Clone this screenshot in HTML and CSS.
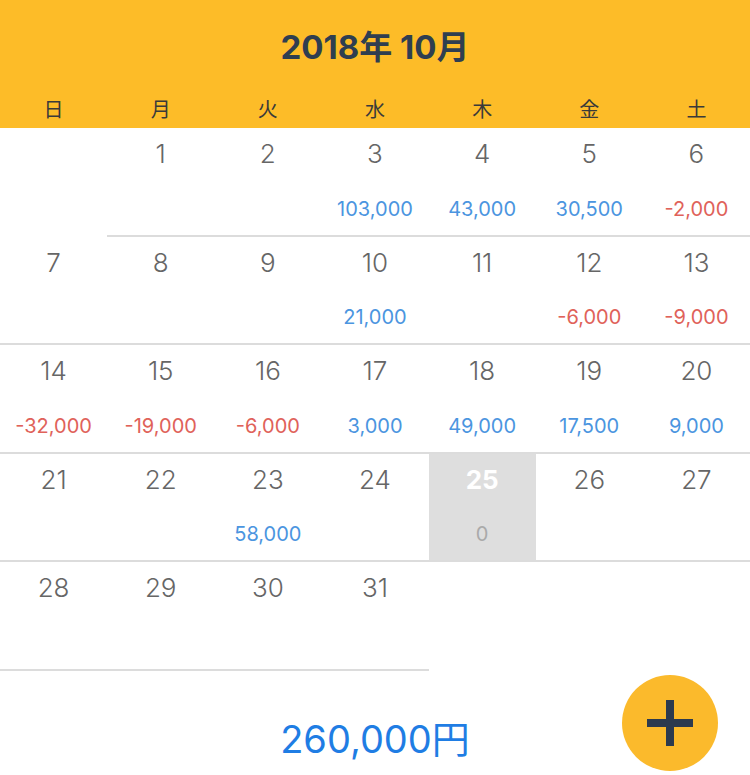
FILE: index.html
```html
<!DOCTYPE html>
<html>
	<head>
		<meta charset="utf-8">
		<title>カレンダー</title>
		<link rel="stylesheet" href="styles.css">
	</head>
	<body>
		<div class="header">
			<h2 class="title">2018年 10月</h2>
			<ul class="week">
				<li>日</li>
				<li>月</li>
				<li>火</li>
				<li>水</li>
				<li>木</li>
				<li>金</li>
				<li>土</li>
			</ul>
		</div>

		<div class="days">
			<div class="day empty"></div>
			<div class="day"><b>1</b><span></span></div>
			<div class="day"><b>2</b><span></span></div>
			<div class="day"><b>3</b><span class="plus">103,000</span></div>
			<div class="day"><b>4</b><span class="plus">43,000</span></div>
			<div class="day"><b>5</b><span class="plus">30,500</span></div>
			<div class="day"><b>6</b><span class="minus">-2,000</span></div>

			<div class="day"><b>7</b><span></span></div>
			<div class="day"><b>8</b><span></span></div>
			<div class="day"><b>9</b><span></span></div>
			<div class="day"><b>10</b><span class="plus">21,000</span></div>
			<div class="day"><b>11</b><span></span></div>
			<div class="day"><b>12</b><span class="minus">-6,000</span></div>
			<div class="day"><b>13</b><span class="minus">-9,000</span></div>

			<div class="day"><b>14</b><span class="minus">-32,000</span></div>
			<div class="day"><b>15</b><span class="minus">-19,000</span></div>
			<div class="day"><b>16</b><span class="minus">-6,000</span></div>
			<div class="day"><b>17</b><span class="plus">3,000</span></div>
			<div class="day"><b>18</b><span class="plus">49,000</span></div>
			<div class="day"><b>19</b><span class="plus">17,500</span></div>
			<div class="day"><b>20</b><span class="plus">9,000</span></div>

			<div class="day"><b>21</b><span></span></div>
			<div class="day"><b>22</b><span></span></div>
			<div class="day"><b>23</b><span class="plus">58,000</span></div>
			<div class="day"><b>24</b><span></span></div>
			<div class="day today"><b>25</b><span class="zero">0</span></div>
			<div class="day"><b>26</b><span></span></div>
			<div class="day"><b>27</b><span></span></div>

			<div class="day"><b>28</b><span></span></div>
			<div class="day"><b>29</b><span></span></div>
			<div class="day"><b>30</b><span></span></div>
			<div class="day"><b>31</b><span></span></div>
		</div>

		<div class="footer">
			<p class="total">260,000円</p>
			<button class="add">
				<svg width="48" height="48" viewBox="0 0 48 48">
					<rect x="1" y="20" width="46" height="8" fill="#2c3a4e"/>
					<rect x="20" y="1" width="8" height="46" fill="#2c3a4e"/>
				</svg>
			</button>
		</div>
	</body>
</html>
```

FILE: styles.css
```css
* {
	margin: 0;
	padding: 0;
	box-sizing: border-box;
}

body {
	width: 750px;
	height: 775px;
	overflow: hidden;
	background-color: white;
	font-family: Inter, "Liberation Sans", "Noto Sans CJK JP", sans-serif;
}

.header {
	height: 128px;
	background-color: #fdbc28;
}

.header .title {
	height: 92px;
	line-height: 95px;
	text-align: center;
	font-size: 33px;
	font-weight: bold;
	color: #2f3e50;
}

.header .week {
	display: grid;
	grid-template-columns: repeat(7, 1fr);
	height: 36px;
	list-style: none;
}

.week li {
	line-height: 34px;
	text-align: center;
	font-family: "Noto Sans CJK JP", sans-serif;
	font-size: 20px;
	color: #3a3a3a;
}

.days {
	display: grid;
	grid-template-columns: repeat(7, 1fr);
	grid-auto-rows: 108.5px;
}

.day {
	display: flex;
	flex-direction: column;
	align-items: center;
	border-bottom: 2px solid #dcdcdc;
}

.day.empty {
	border-bottom: none;
}

.day b {
	height: 57px;
	line-height: 52px;
	font-size: 26px;
	font-weight: 300;
	color: #666;
}

.day span {
	line-height: 52px;
	font-size: 20px;
	color: #999;
}

.day .plus {
	color: #4b95e0;
}

.day .minus {
	color: #e0625a;
}

.day.today {
	background-color: #dedede;
}

.day.today b {
	color: white;
	font-weight: bold;
}

.day.today .zero {
	color: #aaa;
}

.footer {
	position: relative;
	height: 105px;
}

.footer .total {
	padding-top: 45px;
	line-height: 46px;
	text-align: center;
	font-size: 38px;
	color: #1f7de4;
}

.footer .add {
	position: absolute;
	left: 622px;
	top: 4px;
	width: 96px;
	height: 96px;
	border: none;
	border-radius: 50%;
	background-color: #fbba2c;
	display: flex;
	align-items: center;
	justify-content: center;
	cursor: pointer;
}
```
